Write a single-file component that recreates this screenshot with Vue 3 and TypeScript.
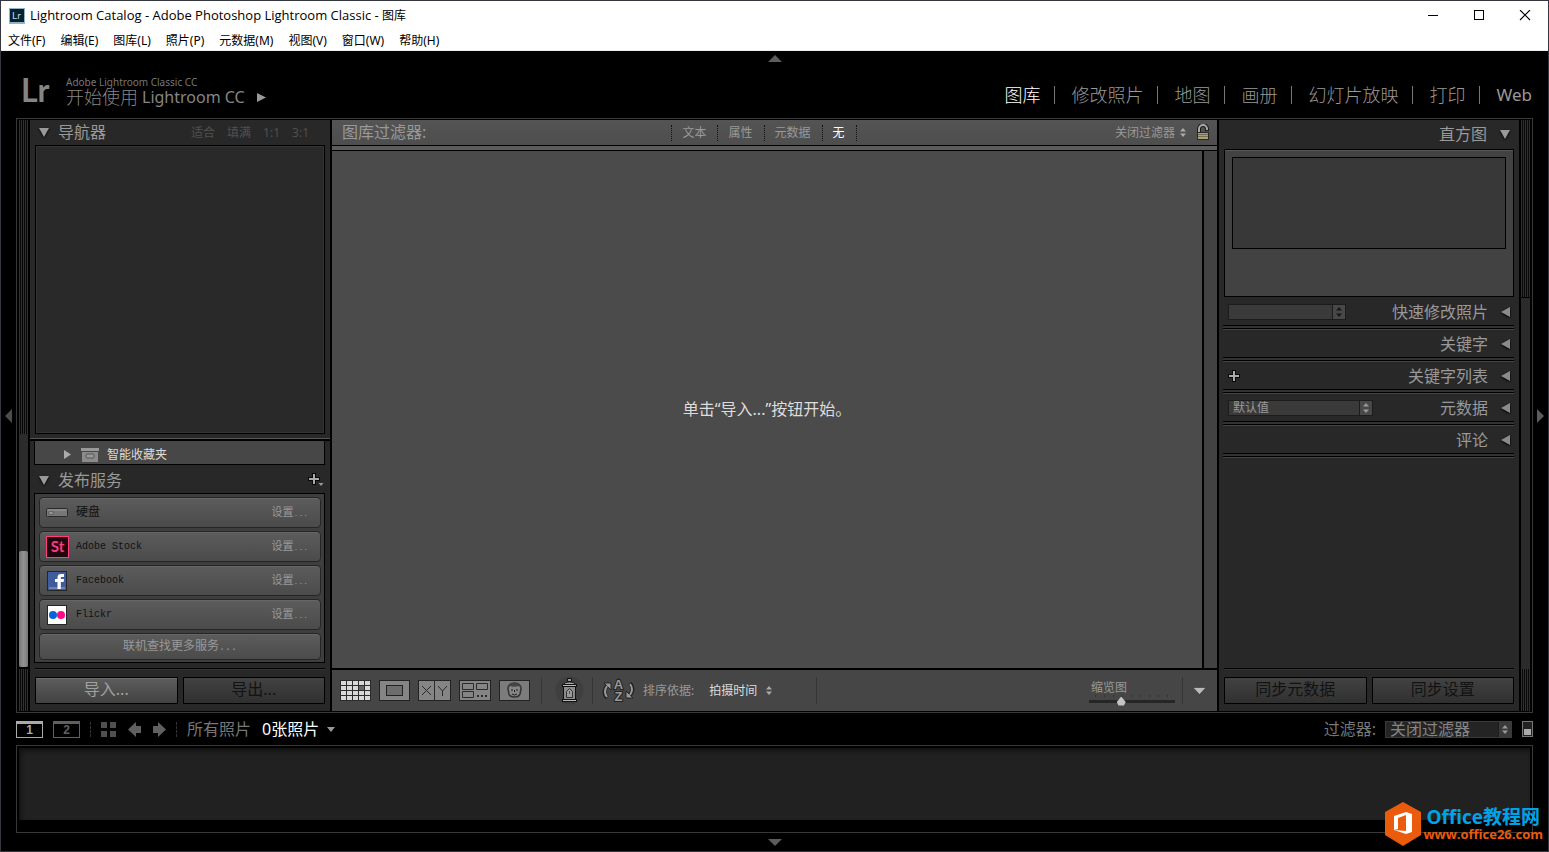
<script setup lang="ts">
import { ref } from 'vue'

const menus = ['文件(F)', '编辑(E)', '图库(L)', '照片(P)', '元数据(M)', '视图(V)', '窗口(W)', '帮助(H)']
const modules = ['图库', '修改照片', '地图', '画册', '幻灯片放映', '打印', 'Web']
const activeModule = ref('图库')

const zoomLevels = ['适合', '填满', '1:1', '3:1']

const filters = ['文本', '属性', '元数据', '无']
const activeFilter = ref('无')

interface Service { id: string; name: string }
const services: Service[] = [
  { id: 'disk', name: '硬盘' },
  { id: 'stock', name: 'Adobe Stock' },
  { id: 'facebook', name: 'Facebook' },
  { id: 'flickr', name: 'Flickr' },
]

interface Section { title: string; control?: 'preset' | 'add' | 'metadata' }
const sections: Section[] = [
  { title: '快速修改照片', control: 'preset' },
  { title: '关键字' },
  { title: '关键字列表', control: 'add' },
  { title: '元数据', control: 'metadata' },
  { title: '评论' },
]

const thumbSize = ref(36)
const gridCells = Array.from({ length: 20 }, (_, i) => ({
  x: 1 + (i % 5) * 6,
  y: 1 + Math.floor(i / 5) * 5,
  off: i === 8,
}))
</script>

<template>
  <div class="window">
    <header class="titlebar">
      <svg class="app-icon" width="16" height="16" viewBox="0 0 16 16" aria-hidden="true">
        <rect width="16" height="16" fill="#8fb4c6" />
        <rect x="1" y="1" width="14" height="13" fill="#062230" />
        <text x="3" y="11" font-size="10" font-family="Lato, sans-serif" fill="#b4dcec">Lr</text>
      </svg>
      <h1>Lightroom Catalog - Adobe Photoshop Lightroom Classic - <span>图库</span></h1>
      <div class="win-buttons">
        <button aria-label="最小化"><svg width="12" height="12"><path d="M1 5.500h10" stroke="#000" /></svg></button>
        <button aria-label="最大化"><svg width="12" height="12"><rect x="1.500" y="0.500" width="9" height="9" fill="none" stroke="#000" /></svg></button>
        <button aria-label="关闭"><svg width="12" height="12"><path d="M1 0l10 10M11 0L1 10" stroke="#000" stroke-width="1.100" /></svg></button>
      </div>
    </header>

    <nav class="menubar" aria-label="菜单">
      <button v-for="m in menus" :key="m">{{ m }}</button>
    </nav>

    <div class="identity-bar">
      <button class="edge-arrow top" aria-label="隐藏模块选取器">
        <svg width="14" height="7"><path d="M7 0l7 7H0z" fill="#5c5c5c" /></svg>
      </button>
      <span class="lr">Lr</span>
      <div class="plate">
        <span class="plate-small">Adobe Lightroom Classic CC</span>
        <button class="plate-main">
          <span class="plate-cjk">开始使用</span>
          <span>Lightroom CC</span>
          <svg width="9" height="9"><path d="M0 0l9 4.500L0 9z" fill="#999" /></svg>
        </button>
      </div>
      <nav class="modules" aria-label="模块">
        <button v-for="m in modules" :key="m" :class="{ active: m === activeModule }" @click="activeModule = m">{{ m }}</button>
      </nav>
    </div>

    <div class="middle">
      <button class="side-arrow" aria-label="隐藏左侧面板">
        <svg width="7" height="14"><path d="M7 0v14L0 7z" fill="#4c4c4c" /></svg>
      </button>

      <main class="workspace">
        <div class="rail">
          <div class="hatch grow"></div>
          <div class="track left-track"><div class="thumb"></div></div>
          <div class="hatch foot"></div>
        </div>

        <aside class="panel left">
          <div class="nav-head">
            <svg class="tri" width="10" height="9"><path d="M0 0h10L5 9z" fill="#999" /></svg>
            <h2>导航器</h2>
            <div class="zooms"><button v-for="z in zoomLevels" :key="z">{{ z }}</button></div>
          </div>
          <div class="nav-preview"></div>
          <div class="divider"></div>
          <div class="smart">
            <svg width="7" height="9"><path d="M0 0l7 4.500L0 9z" fill="#aaa" /></svg>
            <svg class="smart-icon" width="18" height="14" viewBox="0 0 18 14">
              <rect width="18" height="3" fill="#999" /><rect x="1" y="4" width="16" height="10" fill="#8b8b8b" />
              <rect x="5" y="6" width="8" height="4" rx="1" fill="#999" stroke="#555" />
            </svg>
            <span>智能收藏夹</span>
          </div>
          <div class="pub-head">
            <svg class="tri" width="10" height="9"><path d="M0 0h10L5 9z" fill="#999" /></svg>
            <h2>发布服务</h2>
            <button class="plus-menu" aria-label="添加发布服务">
              <svg width="16" height="14" viewBox="0 0 16 14">
                <path d="M6 0v12M0 6h12" stroke="#080808" stroke-width="4" />
                <path d="M6 1v10M1 6h10" stroke="#aaa" stroke-width="2" /><path d="M10.500 10h5L13 13z" fill="#999" />
              </svg>
            </button>
          </div>
          <div class="services">
            <div v-for="s in services" :key="s.id" class="service">
              <span class="service-icon">
                <svg v-if="s.id === 'disk'" width="22" height="10" viewBox="0 0 22 10">
                  <rect x="0.500" y="0.500" width="21" height="8" rx="1" fill="#777" stroke="#2b2b2b" />
                  <path d="M2 2h18" stroke="#999" /><rect x="3" y="4" width="4" height="2" fill="#bbb" stroke="#333" stroke-width="0.500" />
                </svg>
                <svg v-else-if="s.id === 'stock'" width="23" height="22" viewBox="0 0 23 22">
                  <rect x="0.500" y="0.500" width="22" height="21" fill="#22060e" stroke="#ff3c7d" />
                  <text x="11.500" y="16" text-anchor="middle" font-size="15" font-weight="700" font-family="Lato, sans-serif" fill="#ff3c7d">St</text>
                </svg>
                <svg v-else-if="s.id === 'facebook'" width="20" height="20" viewBox="0 0 20 20">
                  <rect x="0.500" y="0.500" width="19" height="19" fill="#3f5d9c" stroke="#252525" />
                  <path d="M2 16h16v2H2z" fill="#6984bd" />
                  <path d="M10.500 18v-7H8V8h2.500V6.500C10.500 4 12 3 14 3h3v3h-2c-1 0-1.200.4-1.200 1v1H17l-.4 3h-2.800v7z" fill="#fff" />
                </svg>
                <svg v-else width="20" height="20" viewBox="0 0 20 20">
                  <rect x="0.500" y="0.500" width="19" height="19" fill="#fff" stroke="#252525" />
                  <circle cx="6" cy="10" r="4" fill="#0b63d8" /><circle cx="14" cy="10" r="4" fill="#ff0a84" />
                </svg>
              </span>
              <span class="service-name">{{ s.name }}</span>
              <button>设置<span>...</span></button>
            </div>
            <button class="more">联机查找更多服务<span>...</span></button>
          </div>
          <div class="actions">
            <button class="enabled">导入...</button>
            <button>导出...</button>
          </div>
        </aside>

        <section class="center">
          <div class="filterbar">
            <h2>图库过滤器:</h2>
            <div class="filter-tabs">
              <button v-for="f in filters" :key="f" :class="{ active: f === activeFilter }" @click="activeFilter = f">{{ f }}</button>
            </div>
            <div class="filter-right">
              <label class="plain-select">
                <select aria-label="过滤器预设"><option>关闭过滤器</option></select>
                <svg width="6" height="9"><path d="M3 0l3 3.500H0zM0 5.500h6L3 9z" fill="#aaa" /></svg>
              </label>
              <button aria-label="锁定过滤器">
                <svg width="14" height="17" viewBox="0 0 14 17">
                  <path d="M3 9V5a4 4 0 0 1 8 0v2" fill="none" stroke="#1c1c1c" stroke-width="4" />
                  <path d="M3 9V5a4 4 0 0 1 8 0v1" fill="none" stroke="#aaa" stroke-width="2" />
                  <rect x="1.500" y="8.500" width="11" height="7" fill="#ab9f78" stroke="#292929" />
                  <path d="M2 10.500h10M2 12.500h10" stroke="#776f52" />
                </svg>
              </button>
            </div>
          </div>
          <div class="filter-edge"></div>
          <div class="canvas">
            <p>单击“导入...”按钮开始。</p>
            <div class="canvas-scroll"></div>
          </div>
          <div class="toolbar">
            <div class="views">
              <button aria-label="网格视图">
                <svg width="31" height="21" viewBox="0 0 31 21">
                  <rect width="31" height="21" fill="#2b2b2b" />
                  <rect v-for="(c, i) in gridCells" :key="i" :x="c.x" :y="c.y" width="5" height="4" :fill="c.off ? '#666' : '#d8d8d8'" />
                </svg>
              </button>
              <button aria-label="放大视图">
                <svg width="31" height="21"><rect x="0.500" y="0.500" width="30" height="20" fill="#858585" stroke="#222" /><rect x="7.500" y="5.500" width="16" height="10" fill="#6d6d6d" stroke="#222" /></svg>
              </button>
              <button aria-label="比较视图">
                <svg width="33" height="21">
                  <rect x="0.500" y="0.500" width="32" height="20" fill="#858585" stroke="#222" /><path d="M16.500 0v21M4 6l9 9M13 6l-9 9M20 6l4.500 5v5M29 6l-4.500 5" fill="none" stroke="#2a2a2a" />
                </svg>
              </button>
              <button aria-label="筛选视图">
                <svg width="32" height="21">
                  <rect x="0.500" y="0.500" width="31" height="20" fill="#858585" stroke="#222" />
                  <path d="M3.500 3.500h11v6h-11zM17.500 3.500h11v6h-11zM3.500 11.500h11v6h-11z" fill="none" stroke="#2a2a2a" /><path d="M18 16h2M22 16h2M26 16h2" stroke="#2a2a2a" stroke-width="2" />
                </svg>
              </button>
              <button aria-label="人物">
                <svg width="31" height="21">
                  <rect x="0.500" y="0.500" width="30" height="20" fill="#7c7c7c" stroke="#222" />
                  <path d="M9 9c-1-8 14-8 13 0l-1 5c-1 4-10 4-11 0z" fill="#858585" stroke="#333" stroke-width="1.500" />
                  <path d="M9 9c-1-8 14-8 13 0l-2-3c-3 1-7 1-9 0z" fill="#444" /><path d="M12 10h2M17 10h2M13 14q2.500 2 5 0M15.500 10v2" stroke="#222" fill="none" />
                </svg>
              </button>
            </div>
            <div class="painter">
              <button aria-label="喷涂工具">
                <svg width="29" height="29" viewBox="0 0 29 29">
                  <circle cx="14.500" cy="14.500" r="14" fill="#3f3f3f" />
                  <path d="M12.500 2.500h4v3h-4z" fill="#999" stroke="#111" /><path d="M8.500 9c0-4 12-4 12 0z" fill="#aaa" stroke="#111" />
                  <rect x="8.500" y="9.500" width="12" height="15" fill="#8b8b8b" stroke="#111" /><path d="M7 9.500h15M7 24.500h15" stroke="#111" stroke-width="3" /><path d="M8 9.500h13M8 24.500h13" stroke="#bbb" />
                  <path d="M11.500 21.500v-6l3-3 3 3v6z" fill="#999" stroke="#333" /><path d="M14.500 15v3" stroke="#555" />
                </svg>
              </button>
            </div>
            <div class="sorting">
              <button aria-label="排序方向">
                <svg width="33" height="27" viewBox="0 0 33 27">
                  <g fill="none" stroke="#222" stroke-width="4"><path d="M5 21q-5-6 0-12M28 6q5 6 0 12" /></g>
                  <path d="M2 6h7v7zM24 14v7h7z" fill="#999" stroke="#222" />
                  <g fill="none" stroke="#999" stroke-width="2"><path d="M5 20q-4-5 0-11M28 7q4 5 0 11" /></g>
                  <g font-family="'Liberation Sans', sans-serif" font-weight="700" font-size="13" fill="#999" stroke="#222" stroke-width="2" paint-order="stroke" text-anchor="middle"><text x="16.500" y="12">A</text><text x="16.500" y="24">Z</text></g>
                </svg>
              </button>
              <label for="sort">排序依据:</label>
              <span class="plain-select bright">
                <select id="sort"><option>拍摄时间</option></select>
                <svg width="6" height="9"><path d="M3 0l3 3.500H0zM0 5.500h6L3 9z" fill="#aaa" /></svg>
              </span>
            </div>
            <div class="thumbs">
              <label for="thumb">缩览图</label>
              <input id="thumb" v-model="thumbSize" type="range" min="0" max="100" />
            </div>
            <button class="tool-menu" aria-label="工具栏选项">
              <svg width="14" height="8"><path d="M0 .5h13L6.500 7.500z" fill="#bbb" stroke="#222" stroke-width="0.500" /></svg>
            </button>
          </div>
        </section>

        <aside class="panel right">
          <div class="histo-head">
            <h2>直方图</h2>
            <svg class="tri" width="10" height="9"><path d="M0 0h10L5 9z" fill="#999" /></svg>
          </div>
          <div class="histogram"><div></div></div>
          <div v-for="s in sections" :key="s.title" class="section">
            <span v-if="s.control === 'preset'" class="box-select preset">
              <select aria-label="存储的预设"><option></option></select>
              <svg width="12" height="14"><path d="M0 0h12v14H0z" fill="#484848" /><path d="M6 2l3 3.500H3zM3 8.500h6L6 12z" fill="#161616" /></svg>
            </span>
            <button v-else-if="s.control === 'add'" class="add" aria-label="添加关键字">
              <svg width="12" height="12"><path d="M6 0v12M0 6h12" stroke="#080808" stroke-width="4" /><path d="M6 1v10M1 6h10" stroke="#aaa" stroke-width="2" /></svg>
            </button>
            <span v-else-if="s.control === 'metadata'" class="box-select meta">
              <select aria-label="元数据集"><option>默认值</option></select>
              <svg width="12" height="14"><path d="M0 0h12v14H0z" fill="#484848" /><path d="M6 2l3 3.500H3zM3 8.500h6L6 12z" fill="#999" /></svg>
            </span>
            <h2>{{ s.title }}</h2>
            <svg class="tri" width="9" height="10"><path d="M9 0v10L0 5z" fill="#8b8b8b" /></svg>
          </div>
          <div class="filler"></div>
          <div class="actions">
            <button>同步元数据</button>
            <button>同步设置</button>
          </div>
        </aside>

        <div class="rail">
          <div class="hatch histo"></div>
          <div class="track grow"></div>
          <div class="hatch foot"></div>
        </div>
      </main>

      <button class="side-arrow" aria-label="隐藏右侧面板">
        <svg width="7" height="14"><path d="M0 0v14l7-7z" fill="#5c5c5c" /></svg>
      </button>
    </div>

    <div class="film-head">
      <button class="screen on">1</button>
      <button class="screen">2</button>
      <div class="film-nav">
        <button aria-label="网格"><svg width="15" height="15"><path d="M0 0h6v6H0zM9 0h6v6H9zM0 9h6v6H0zM9 9h6v6H9z" fill="#505050" /></svg></button>
        <button aria-label="后退"><svg width="13" height="15"><path d="M0 7.500L8 0v4h5v7H8v4z" fill="#606060" /></svg></button>
        <button aria-label="前进"><svg width="13" height="15"><path d="M13 7.500L5 0v4H0v7h5v4z" fill="#606060" /></svg></button>
      </div>
      <span class="source">所有照片</span>
      <button class="count">0张照片 <svg width="8" height="5"><path d="M0 0h8L4 5z" fill="#999" /></svg></button>
      <label class="film-label" for="film-filter">过滤器:</label>
      <span class="box-select film-select">
        <select id="film-filter"><option>关闭过滤器</option></select>
        <svg width="12" height="15"><path d="M0 0h12v15H0z" fill="#3a3a3a" /><path d="M6 3l3 3.500H3zM3 8.500h6L6 12z" fill="#999" /></svg>
      </span>
      <button class="switch" aria-label="启用过滤器"><span></span></button>
    </div>

    <div class="filmstrip"><div></div></div>

    <footer class="bottom-edge">
      <button aria-label="隐藏胶片显示窗格"><svg width="14" height="7"><path d="M0 0h14L7 7z" fill="#5c5c5c" /></svg></button>
    </footer>

    <div class="watermark">
      <svg width="36" height="44" viewBox="0 0 36 44" aria-hidden="true">
        <path d="M18 0l18 10v23L18 44 0 33V10z" fill="#eb5b0c" />
        <path d="M9 14l12-4 6 2v18l-6 2-12-4 12 1V13l-8 3v11l-4 1z" fill="#fff" />
      </svg>
      <div><strong>Office教程网</strong><a href="#">www.office26.com</a></div>
    </div>
  </div>
</template>

<style>
body { background: #000; }
</style>

<style scoped>
* { box-sizing: border-box; }
.window {
  position: relative; display: flex; flex-direction: column; height: 100vh; overflow: hidden;
  border: 1px solid #343640; background: #000; color: #999;
  font: 12px/16px "Noto Sans", "Noto Sans CJK SC", sans-serif;
}
button, select { font: inherit; color: inherit; background: none; border: 0; padding: 0; margin: 0; }
h1, h2, p { margin: 0; font-weight: 400; }
h2 { font-size: 16px; line-height: 20px; }
svg { display: block; flex: none; }

.titlebar { display: flex; align-items: center; height: 29px; flex: none; background: #fff; color: #000; padding-left: 8px; }
.titlebar h1 { font: 13px/16px "Open Sans", "Noto Sans CJK SC", sans-serif; margin-left: 5px; }
.titlebar h1 span { font-size: 12px; }
.win-buttons { display: flex; margin-left: auto; }
.win-buttons button { width: 46px; height: 28px; display: grid; place-items: center; }
.menubar { display: flex; gap: 15px; height: 21px; flex: none; padding: 1px 0 0 7px; background: #fff; color: #000; border-bottom: 1px solid #eee; }

.identity-bar { position: relative; display: flex; height: 67px; flex: none; padding: 0 16px 0 20px; }
.edge-arrow { position: absolute; left: 50%; top: 4px; margin-left: -7px; }
.lr { width: 45px; padding-top: 21px; font: 700 32px/36px Lato, sans-serif; color: #858585; }
.plate { padding-top: 25px; }
.plate-small { display: block; font-size: 10px; line-height: 12px; color: #777; }
.plate-main { display: flex; align-items: center; font-size: 16px; line-height: 18px; gap: 4px; color: #858585; }
.plate-cjk { font-size: 18px; line-height: 16px; font-weight: 300; }
.plate-main svg { margin-left: 8px; }
.modules { display: flex; align-items: center; margin-left: auto; padding-top: 21px; }
.modules button { font-size: 18px; line-height: 20px; font-weight: 300; color: #999; display: flex; align-items: center; }
.modules button:last-child { font-weight: 400; font-size: 17px; }
.modules button + button::before { content: ""; width: 1px; height: 18px; background: #777; margin: 0 16px 0 14px; }
.modules .active { color: #fff; }

.middle { display: flex; flex: 1; min-height: 0; }
.side-arrow { width: 15px; flex: none; display: grid; place-items: center; }
.workspace {
  flex: 1; min-width: 0; display: grid; grid-template-columns: 9px 300px minmax(0, 1fr) 300px 9px; grid-template-rows: minmax(0, 1fr);
  gap: 2px; padding: 1px 2px; border: 1px solid #383838;
}
.rail { display: flex; flex-direction: column; }
.hatch { background: repeating-linear-gradient(90deg, #303030 0 1px, #080808 1px 2px); }
.grow { flex: 1; }
.track { background: #2b2b2b; }
.left-track { height: 235px; display: flex; align-items: flex-end; border-bottom: 2px solid #000; }
.thumb { width: 9px; height: 116px; border-radius: 2px; background: linear-gradient(90deg, #777, #929292 50%, #777); }
.foot { height: 42px; }
.histo { height: 178px; border-bottom: 1px solid #000; }

.panel { display: flex; flex-direction: column; background: #282828; min-height: 0; }
.left { padding: 0 5px 0 4px; }
.nav-head, .pub-head { display: flex; align-items: center; flex: none; padding-left: 5px; }
.nav-head { height: 25px; }
.nav-head h2 { padding-bottom: 2px; }
.nav-head h2, .pub-head h2 { margin-left: 9px; }
.tri { filter: drop-shadow(0 1px 1px #000); }
.zooms { display: flex; gap: 12px; margin-left: auto; padding-right: 16px; color: #505050; }
.nav-preview { flex: 1; min-height: 0; margin-left: 1px; background: #292929; border: 1px solid #000; box-shadow: inset 0 0 0 1px #333; }
.divider { height: 7px; margin: 0 -5px 0 -4px; border-bottom: 2px solid #000; background: linear-gradient(#282828 4px, #555 4px); flex: none; }
.smart { display: flex; align-items: center; height: 24px; flex: none; padding: 4px 0 0 29px; border: 1px solid #000; border-top: 0; background: #474747; color: #ddd; }
.smart-icon { margin: 0 8px 0 10px; }
.pub-head { height: 28px; padding-top: 2px; }
.plus-menu { margin: 0 1px 0 auto; }
.services { display: flex; flex-direction: column; gap: 3px; padding: 3px 3px 2px 4px; border: 1px solid #000; background: #3e3e3e; flex: none; }
.service, .more { border: 1px solid #252525; border-radius: 4px; background: linear-gradient(#5c5c5c, #4b4b4b); box-shadow: inset 0 1px #666; }
.service { display: flex; align-items: center; height: 31px; padding: 0 12px 0 5px; color: #111; }
.service-icon { width: 24px; display: grid; place-items: center; margin-right: 7px; }
.service-name { flex: 1; font: 10px/16px "Liberation Mono", "Noto Sans CJK SC", monospace; }
.service:first-child .service-name { font-size: 12px; }
.service button { color: #999; font-size: 11px; }
.service button span { font-family: "Liberation Mono", monospace; font-size: 8px; }
.more span { font-family: "Liberation Mono", monospace; font-size: 10px; }
.more { height: 27px; color: #999; }
.actions { display: grid; grid-template-columns: 1fr 1fr; gap: 5px; flex: none; margin: 5px 0 0 1px; padding: 8px 0 7px; border-top: 1px solid #000; box-shadow: inset 0 1px #333; }
.actions button { height: 27px; padding-bottom: 3px; border: 1px solid #000; background: linear-gradient(#424242, #303030); color: #121212; font-size: 16px; line-height: 18px; }
.actions .enabled { background: linear-gradient(#5d5d5d, #424242); box-shadow: inset 0 1px #6d6d6d; color: #a0a0a0; }

.center { display: flex; flex-direction: column; min-width: 0; min-height: 0; background: #4b4b4b; }
.filterbar { display: grid; grid-template-columns: 1fr auto 1fr; align-items: center; height: 25px; flex: none; padding: 0 7px 0 10px; background: linear-gradient(#545454, #4e4e4e); }
.filterbar h2 { padding-bottom: 2px; }
.filter-tabs { display: flex; margin-right: 24px; border-left: 1px dotted #111; }
.filter-tabs button { padding: 0 11px 0 10px; border-right: 1px dotted #111; }
.filter-tabs .active { color: #fff; }
.filter-right { display: flex; justify-content: flex-end; align-items: center; gap: 10px; }
.plain-select { display: flex; align-items: center; gap: 4px; }
select { appearance: none; outline: 0; }
.bright { color: #ddd; gap: 8px; }
.filter-edge { height: 6px; flex: none; border: solid #000; border-width: 1px 0; background: #5c5c5c; }
.canvas { display: flex; flex: 1; align-items: center; min-height: 0; border-bottom: 2px solid #000; }
.canvas p { flex: 1; text-align: center; font-size: 16px; line-height: 20px; padding-bottom: 2px; color: #ddd; }
.canvas-scroll { align-self: stretch; width: 15px; border-left: 2px solid #000; background: #424242; }
.toolbar { display: flex; align-items: center; height: 41px; flex: none; background: #464646; padding-left: 8px; }
.views { display: flex; gap: 8px; }
.painter, .sorting { display: flex; align-items: center; height: 27px; border-left: 1px solid #363636; }
.painter { margin-left: 11px; width: 51px; padding-left: 4px; justify-content: center; }
.sorting { gap: 8px; padding: 0 44px 0 9px; border-right: 1px solid #363636; }
.sorting label { margin-right: 7px; }
.thumbs { display: flex; flex-direction: column; margin-left: auto; width: 86px; padding-top: 4px; }
.thumbs label { padding-left: 2px; line-height: 14px; }
.thumbs input { appearance: none; width: 86px; height: 10px; margin: 0; background: linear-gradient(#262626, #262626) 0 5px / 100% 3px no-repeat, repeating-linear-gradient(90deg, transparent 0 6px, #333 6px 7px, transparent 7px 9px) 0 0 / 100% 2px no-repeat; }
.thumbs input::-webkit-slider-thumb { appearance: none; width: 9px; height: 9px; margin-top: 3px; background: #c4c4c4; clip-path: polygon(50% 0, 100% 60%, 80% 100%, 20% 100%, 0 60%); }
.tool-menu { height: 27px; width: 35px; margin-left: 7px; border-left: 1px solid #363636; display: grid; place-items: center; }

.right { padding: 0 5px 0 4px; }
.histo-head { display: flex; align-items: center; justify-content: flex-end; height: 29px; padding-right: 4px; flex: none; }
.histo-head h2, .section h2 { margin-right: 13px; }
.histo-head h2 { padding-bottom: 2px; }
.histogram { height: 148px; flex: none; margin: 0 0 1px 1px; padding: 7px; border: 1px solid #000; background: #424242; box-shadow: inset 0 1px #555; }
.histogram div { height: 92px; border: 1px solid #000; background: #383838; }
.section { display: flex; align-items: center; height: 32px; flex: none; padding: 0 4px 5px 5px; background: linear-gradient(#000, #000) 0 27px / 100% 1px no-repeat, linear-gradient(#333, #333) 0 28px / 100% 2px no-repeat, linear-gradient(#000, #000) 0 30px / 100% 1px no-repeat, linear-gradient(#444, #444) 0 31px / 100% 1px no-repeat; }
.section h2 { margin-left: auto; }
.filler { flex: 1; }
.box-select { position: relative; display: flex; height: 16px; border: 1px solid #1c1c1c; background: #3a3a3a; }
.box-select select { width: 100%; padding: 0 20px 0 4px; line-height: 13px; }
.box-select svg { position: absolute; right: 0; top: 0; border-left: 1px solid #1c1c1c; width: 13px; pointer-events: none; }
.preset { width: 118px; }
.meta { width: 145px; }

.film-head { display: flex; align-items: center; height: 32px; flex: none; padding: 0 15px; font-size: 16px; line-height: 20px; }
.screen { width: 27px; height: 17px; border: 1px solid #606060; border-top-width: 3px; color: #606060; font: 700 12px/13px "Liberation Sans", sans-serif; margin-right: 10px; }
.screen.on { border-color: #aaa; color: #aaa; }
.film-nav { display: flex; align-items: center; gap: 12px; padding: 0 10px; border: dashed #333; border-width: 0 1px; }
.source { margin: 0 11px 0 10px; color: #777; }
.count { display: flex; align-items: center; gap: 8px; color: #fff; }
.film-label { margin-left: auto; color: #777; }
.film-select { width: 127px; height: 17px; margin: 0 10px 0 9px; border: 1px solid #3a3a3a; background: #242424; }
.film-select select { font-size: 16px; line-height: 15px; color: #858585; }
.switch { width: 11px; height: 16px; border: 1px solid #777; background: #222; display: flex; align-items: flex-end; padding: 1px; }
.switch span { width: 100%; height: 6px; background: #aaa; }
.filmstrip { height: 88px; flex: none; margin: 0 15px; padding: 2px 2px 12px; border: 1px solid #383838; }
.filmstrip div { height: 100%; background: #212121; box-shadow: inset 2px 3px 4px #111; }
.bottom-edge { height: 18px; flex: none; display: grid; place-items: center; }

.watermark { position: absolute; right: 5px; bottom: 5px; display: flex; align-items: center; gap: 2px; }
.watermark strong { display: block; font: 700 19px/20px "Open Sans", "Noto Sans CJK SC", sans-serif; color: #00a2e8; padding-left: 3px; }
.watermark a { display: block; font: 700 13px/14px "Open Sans", sans-serif; color: #eb5b0c; text-decoration: none; }
</style>
